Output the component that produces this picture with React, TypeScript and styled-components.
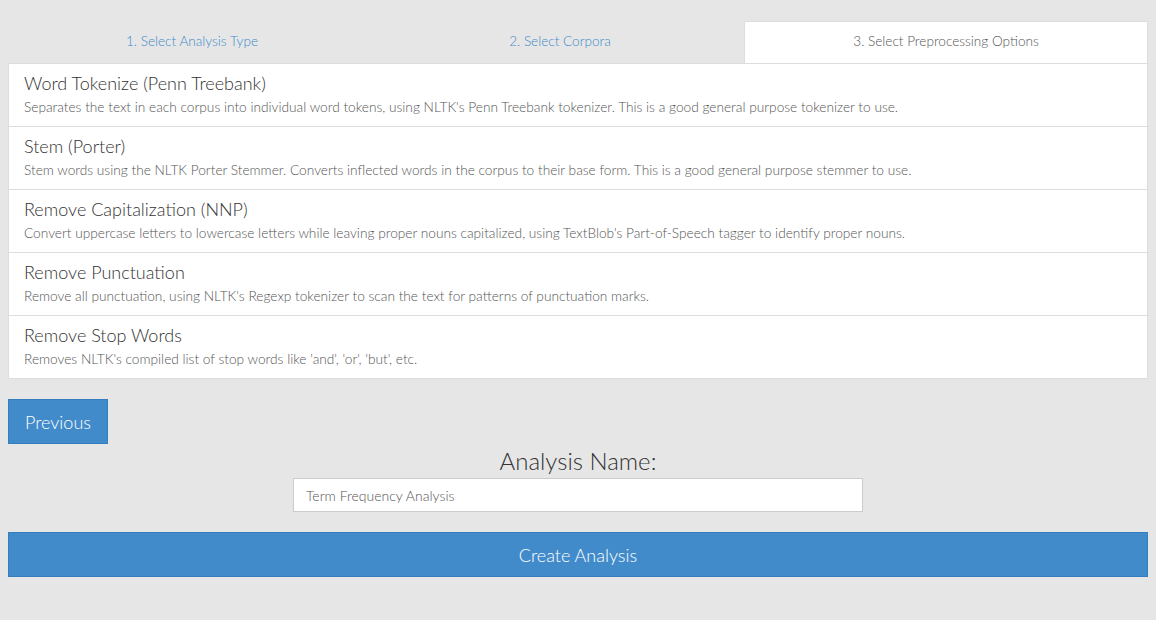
import React from "react";
import styled, { createGlobalStyle } from "styled-components";

const Global = createGlobalStyle`
  html, body { margin: 0; padding: 0; background: #e6e6e6; }
  body { font-family: Lato, "Open Sans", sans-serif; font-weight: 300; color: #333; }
  * { box-sizing: border-box; }
`;

const Page = styled.div`
  padding: 21px 8px 20px;
  display: flex;
  flex-direction: column;
`;

const Tabs = styled.div`
  display: grid;
  grid-template-columns: 368px 368px 1fr;
  height: 42px;
`;

const Tab = styled.div<{ $active?: boolean }>`
  display: flex;
  align-items: center;
  justify-content: center;
  font-size: 13.6px;
  font-weight: 300;
  color: ${(p) => (p.$active ? "#555" : "#428bca")};
  background: ${(p) => (p.$active ? "#fff" : "transparent")};
  border: 1px solid ${(p) => (p.$active ? "#ddd" : "transparent")};
  border-bottom: none;
  padding-bottom: 3px;
`;

const Panel = styled.div`
  background: #fff;
  border: 1px solid #ddd;
  display: flex;
  flex-direction: column;
`;

const Option = styled.div`
  height: 63px;
  padding: 7px 15px 0;
  border-top: 1px solid #ddd;
  &:first-child { border-top: none; height: 62px; }
`;

const OptionTitle = styled.div`
  font-size: 18px;
  font-weight: 300;
  color: #333;
  line-height: 24px;
`;

const OptionDesc = styled.div`
  font-size: 13.7px;
  font-weight: 300;
  color: #555;
  line-height: 18px;
  margin-top: 3px;
`;

const Button = styled.button<{ $block?: boolean }>`
  font-family: Lato, "Open Sans", sans-serif;
  font-weight: 300;
  font-size: 18px;
  color: #fff;
  background: #428bca;
  border: 1px solid #357ebd;
  height: 45px;
  padding: 0 16px;
  width: ${(p) => (p.$block ? "100%" : "auto")};
  cursor: pointer;
`;

const PrevRow = styled.div`
  margin-top: 20px;
  display: flex;
`;

const NameBlock = styled.div`
  display: flex;
  flex-direction: column;
  align-items: center;
`;

const NameLabel = styled.div`
  font-size: 24px;
  font-weight: 300;
  color: #333;
  line-height: 34px;
`;

const NameInput = styled.input`
  width: 570px;
  height: 34px;
  border: 1px solid #ccc;
  background: #fff;
  padding: 0 12px;
  font-family: Lato, "Open Sans", sans-serif;
  font-size: 14px;
  font-weight: 300;
  color: #555;
  outline: none;
`;

const CreateRow = styled.div`
  margin-top: 20px;
  display: flex;
`;

const options = [
  {
    title: "Word Tokenize (Penn Treebank)",
    desc: "Separates the text in each corpus into individual word tokens, using NLTK's Penn Treebank tokenizer. This is a good general purpose tokenizer to use.",
  },
  {
    title: "Stem (Porter)",
    desc: "Stem words using the NLTK Porter Stemmer. Converts inflected words in the corpus to their base form. This is a good general purpose stemmer to use.",
  },
  {
    title: "Remove Capitalization (NNP)",
    desc: "Convert uppercase letters to lowercase letters while leaving proper nouns capitalized, using TextBlob's Part-of-Speech tagger to identify proper nouns.",
  },
  {
    title: "Remove Punctuation",
    desc: "Remove all punctuation, using NLTK's Regexp tokenizer to scan the text for patterns of punctuation marks.",
  },
  {
    title: "Remove Stop Words",
    desc: "Removes NLTK's compiled list of stop words like 'and', 'or', 'but', etc.",
  },
];

export default function App() {
  return (
    <>
      <Global />
      <Page>
        <Tabs>
          <Tab>1. Select Analysis Type</Tab>
          <Tab>2. Select Corpora</Tab>
          <Tab $active>3. Select Preprocessing Options</Tab>
        </Tabs>
        <Panel>
          {options.map((o) => (
            <Option key={o.title}>
              <OptionTitle>{o.title}</OptionTitle>
              <OptionDesc>{o.desc}</OptionDesc>
            </Option>
          ))}
        </Panel>
        <PrevRow>
          <Button>Previous</Button>
        </PrevRow>
        <NameBlock>
          <NameLabel>Analysis Name:</NameLabel>
          <NameInput defaultValue="Term Frequency Analysis" />
        </NameBlock>
        <CreateRow>
          <Button $block>Create Analysis</Button>
        </CreateRow>
      </Page>
    </>
  );
}
